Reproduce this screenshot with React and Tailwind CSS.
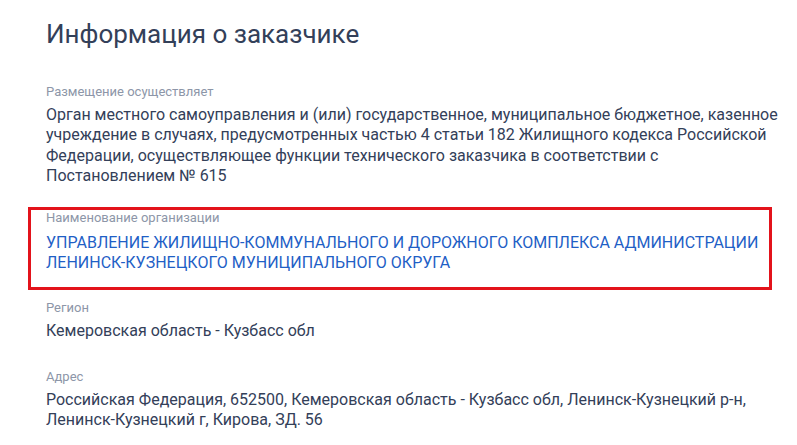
export default function App() {
  const font = { fontFamily: "Roboto, 'Noto Sans', sans-serif" };
  return (
    <div className="w-[797px] h-[445px] overflow-hidden bg-white" style={font}>
      <h1 className="pl-[46px] pt-[18px] text-[26px] leading-[32px] font-normal text-[#334059]">
        Информация о заказчике
      </h1>
      <div className="mt-[34px] pl-[46px] pr-[12px]">
        <div className="text-[13px] leading-[16px] text-[#8d96a8]">Размещение осуществляет</div>
        <div className="mt-[5px] text-[16px] leading-[20.3px] text-[#334059]">
          Орган местного самоуправления и (или) государственное, муниципальное бюджетное, казенное учреждение в случаях, предусмотренных частью 4 статьи 182 Жилищного кодекса Российской Федерации, осуществляющее функции технического заказчика в соответствии с Постановлением № 615
        </div>
      </div>
      <div className="relative mt-[21px] pl-[46px] pr-[12px] pt-[3px] pb-[16px]">
        <div className="absolute top-0 bottom-0 left-[28px] w-[744px] border-[3px] border-[#e3131b] pointer-events-none" />
        <div className="text-[13px] leading-[16px] text-[#8d96a8]">Наименование организации</div>
        <div className="mt-[7px] text-[16px] leading-[20.3px] text-[#1f5fc6]">
          УПРАВЛЕНИЕ ЖИЛИЩНО-КОММУНАЛЬНОГО И ДОРОЖНОГО КОМПЛЕКСА АДМИНИСТРАЦИИ ЛЕНИНСК-КУЗНЕЦКОГО МУНИЦИПАЛЬНОГО ОКРУГА
        </div>
      </div>
      <div className="mt-[10px] pl-[46px] pr-[12px]">
        <div className="text-[13px] leading-[16px] text-[#8d96a8]">Регион</div>
        <div className="mt-[5px] text-[16px] leading-[20.3px] text-[#334059]">
          Кемеровская область - Кузбасс обл
        </div>
      </div>
      <div className="mt-[28px] pl-[46px] pr-[12px]">
        <div className="text-[13px] leading-[16px] text-[#8d96a8]">Адрес</div>
        <div className="mt-[5px] text-[16px] leading-[20.3px] text-[#334059]">
          Российская Федерация, 652500, Кемеровская область - Кузбасс обл, Ленинск-Кузнецкий р-н, Ленинск-Кузнецкий г, Кирова, ЗД. 56
        </div>
      </div>
    </div>
  );
}
